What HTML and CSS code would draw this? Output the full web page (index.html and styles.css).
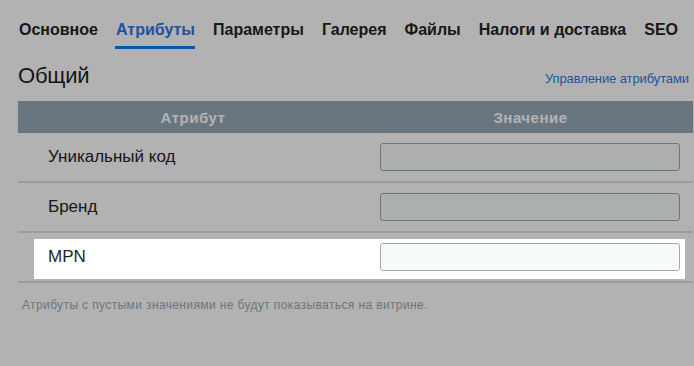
FILE: index.html
```html
<!DOCTYPE html>
<html lang="ru">
<head>
<meta charset="utf-8">
<title>Атрибуты</title>
<link rel="stylesheet" href="styles.css">
</head>
<body>
<div class="page">
  <nav class="tabs">
    <a class="tab">Основное</a>
    <a class="tab active">Атрибуты</a>
    <a class="tab">Параметры</a>
    <a class="tab">Галерея</a>
    <a class="tab">Файлы</a>
    <a class="tab">Налоги и доставка</a>
    <a class="tab">SEO</a>
  </nav>
  <div class="section-head">
    <h2 class="section-title">Общий</h2>
    <a class="manage-link">Управление атрибутами</a>
  </div>
  <div class="attr-table">
    <div class="attr-header">
      <div class="col-name">Атрибут</div>
      <div class="col-value">Значение</div>
    </div>
    <div class="attr-row">
      <div class="attr-label">Уникальный код</div>
      <div class="attr-value"><input class="attr-input" type="text"></div>
    </div>
    <div class="attr-row">
      <div class="attr-label">Бренд</div>
      <div class="attr-value"><input class="attr-input" type="text"></div>
    </div>
    <div class="attr-row spot-row">
      <div class="attr-label">MPN</div>
      <div class="attr-value"><input class="attr-input" type="text"></div>
      <div class="spotlight"></div>
    </div>
  </div>
  <p class="hint">Атрибуты с пустыми значениями не будут показываться на витрине.</p>
</div>
</body>
</html>
```
FILE: styles.css
```css
html {
  margin: 0;
  padding: 0;
  background: #ffffff;
  overflow: hidden;
}
body {
  margin: 0;
  padding: 0;
  min-height: 100vh;
  font-family: "Liberation Sans", Arial, sans-serif;
  color: #242424;
}
.page {
  padding: 0 1px 0 18px;
}
.tabs {
  display: flex;
  gap: 17px;
  padding-top: 20px;
}
.tab {
  font-size: 16px;
  font-weight: bold;
  line-height: 20px;
  color: #252525;
  padding: 0 0 6px 1px;
  border-bottom: 3px solid transparent;
}
.tab.active {
  color: #2e74e8;
  border-bottom-color: #0f7df4;
}
.section-head {
  display: flex;
  justify-content: space-between;
  align-items: baseline;
  margin-top: 14px;
}
.section-title {
  margin: 0;
  font-size: 22px;
  font-weight: normal;
  line-height: 26px;
  color: #222;
  letter-spacing: -0.2px;
}
.manage-link {
  font-size: 13px;
  color: #3477e5;
  margin-right: 4px;
  letter-spacing: -0.1px;
}
.attr-table {
  margin-top: 12px;
}
.attr-header {
  display: grid;
  grid-template-columns: 350px 1fr;
  height: 32px;
  align-items: center;
  background: #98aab7;
  color: #ffffff;
  font-size: 15px;
  font-weight: bold;
  letter-spacing: 0.5px;
  text-align: center;
}
.attr-row {
  display: grid;
  grid-template-columns: 350px 1fr;
  align-items: center;
  height: 48px;
  border-bottom: 2px solid #dde1e6;
}
.attr-label {
  padding-left: 30px;
  font-size: 17px;
  color: #252525;
}
.attr-value {
  padding: 0 13px 0 12px;
  display: flex;
}
.attr-input {
  width: 100%;
  height: 28px;
  box-sizing: border-box;
  margin: 0;
  border: 1px solid #9aacb9;
  border-radius: 3px;
  background: #f8fafa;
}
.spot-row {
  position: relative;
}
.spotlight {
  position: absolute;
  left: 16px;
  right: 8px;
  top: 6px;
  bottom: 2px;
  box-shadow: 0 0 0 3000px rgba(0, 0, 0, 0.3);
  pointer-events: none;
  z-index: 10;
}
.hint {
  margin: 14px 0 0 4px;
  font-size: 12px;
  line-height: 16px;
  letter-spacing: 0.38px;
  color: #9daab6;
}
```
